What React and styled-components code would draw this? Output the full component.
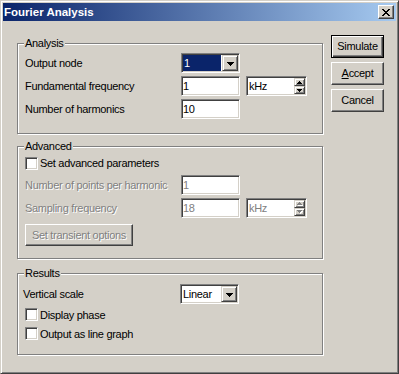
import React from 'react';
import styled, { createGlobalStyle, css } from 'styled-components';

const C = {
  face: '#d4d0c8',
  light: '#ffffff',
  shadow: '#808080',
  dark: '#404040',
  select: '#0a246a',
};

const GlobalStyle = createGlobalStyle`
  html, body { margin: 0; padding: 0; background: ${C.face}; }
`;

const sunken = css`
  box-sizing: border-box;
  border: 1px solid;
  border-color: ${C.shadow} ${C.light} ${C.light} ${C.shadow};
  box-shadow: inset 1px 1px ${C.dark}, inset -1px -1px ${C.face};
`;

const raised = css`
  box-sizing: border-box;
  border: 1px solid;
  border-color: ${C.face} ${C.dark} ${C.dark} ${C.face};
  box-shadow: inset 1px 1px ${C.light}, inset -1px -1px ${C.shadow};
  background: ${C.face};
`;

const disabledText = css`
  color: ${C.shadow};
  text-shadow: 1px 1px 0 ${C.light};
`;

const Window = styled.div`
  width: 399px;
  height: 374px;
  box-sizing: border-box;
  background: ${C.face};
  border: 1px solid;
  border-color: ${C.face} ${C.dark} ${C.dark} ${C.face};
  box-shadow: inset 1px 1px ${C.light}, inset -1px -1px ${C.shadow};
  padding: 2px;
  display: flex;
  flex-direction: column;
  font-family: "Liberation Sans", Arial, sans-serif;
  font-size: 11px;
  letter-spacing: -0.3px;
  color: #000;
`;

const TitleBar = styled.div`
  flex: none;
  height: 18px;
  display: flex;
  align-items: center;
  justify-content: space-between;
  padding: 0 2px 0 1px;
  background: linear-gradient(to right, #0a246a, #a6caf0);
`;

const Title = styled.span`
  color: #fff;
  font-weight: bold;
  font-size: 11.5px;
  letter-spacing: 0;
  line-height: 18px;
  white-space: nowrap;
`;

const CloseButton = styled.div`
  box-sizing: border-box;
  width: 16px;
  height: 14px;
  border: 1px solid;
  border-color: ${C.light} ${C.dark} ${C.dark} ${C.light};
  box-shadow: inset -1px -1px ${C.shadow};
  background: ${C.face};
  display: flex;
  align-items: center;
  justify-content: center;
  padding: 1px 0 0 0;
`;

const Body = styled.div`
  flex: 1;
  display: flex;
  align-items: flex-start;
  padding: 14px 0 0 14px;
`;

const Groups = styled.div`
  width: 306px;
  margin-top: 2px;
  display: flex;
  flex-direction: column;
`;

const Group = styled.fieldset`
  box-sizing: border-box;
  width: 306px;
  min-width: 0;
  margin: ${p => p.$mt || 0}px 0 0 0;
  padding: ${p => p.$pt}px 7px ${p => p.$pb}px 7px;
  border: 1px solid ${C.shadow};
  box-shadow: inset 1px 1px ${C.light}, 1px 1px ${C.light};
`;

const Legend = styled.legend`
  padding: 0 1px;
  margin-left: -1px;
  line-height: 12px;
  background: ${C.face};
`;

const Row = styled.div`
  display: flex;
  align-items: center;
  height: ${p => p.$h || 20}px;
  margin-top: ${p => p.$mt || 0}px;
`;

const Label = styled.span`
  flex: none;
  width: ${p => p.$w || 156}px;
  margin-left: ${p => p.$ml || 0}px;
  white-space: nowrap;
  ${p => p.$disabled && disabledText}
`;

const Field = styled.div`
  ${sunken}
  width: ${p => p.$w || 59}px;
  height: 20px;
  background: #fff;
  display: flex;
  align-items: center;
  padding: 0 1px 1px 1px;
  color: ${p => (p.$disabled ? C.shadow : '#000')};
`;

const Combo = styled.div`
  ${sunken}
  width: ${p => p.$w || 59}px;
  height: 20px;
  background: #fff;
  display: flex;
  padding: 1px;
  margin-left: ${p => p.$ml || 0}px;
`;

const ComboText = styled.div`
  flex: 1;
  display: flex;
  align-items: center;
  padding: 0 0 1px 1px;
  margin-right: 1px;
  ${p =>
    p.$selected &&
    css`
      background: ${C.select};
      color: #fff;
    `}
`;

const ComboButton = styled.div`
  ${raised}
  flex: none;
  width: 16px;
  display: flex;
  align-items: center;
  justify-content: center;
  padding-top: 1px;
`;

const Spin = styled.div`
  ${sunken}
  width: 61px;
  height: 20px;
  margin-left: 6px;
  background: #fff;
  display: flex;
  padding: 1px;
  color: ${p => (p.$disabled ? C.shadow : '#000')};
`;

const SpinText = styled.div`
  flex: 1;
  display: flex;
  align-items: center;
  padding: 0 0 1px 1px;
`;

const SpinButtons = styled.div`
  flex: none;
  width: 11px;
  display: flex;
  flex-direction: column;
`;

const SpinButton = styled.div`
  ${raised}
  flex: 1;
  display: flex;
  align-items: center;
  justify-content: center;
`;

const Check = styled.span`
  ${sunken}
  flex: none;
  width: 13px;
  height: 13px;
  background: #fff;
  margin-right: 2px;
`;

const CheckRow = styled.label`
  display: flex;
  align-items: center;
  height: ${p => p.$h || 16}px;
  margin-top: ${p => p.$mt || 0}px;
  white-space: nowrap;
`;

const pushBevel = css`
  box-sizing: border-box;
  background: ${C.face};
  border: 1px solid;
  border-color: ${C.light} ${C.dark} ${C.dark} ${C.light};
  box-shadow: inset -1px -1px ${C.shadow}, inset 1px 1px ${C.face};
`;

const PushButton = styled.div`
  ${pushBevel}
  display: flex;
  align-items: center;
  justify-content: center;
  width: ${p => p.$w || 53}px;
  height: ${p => p.$h || 23}px;
  margin-top: ${p => p.$mt || 0}px;
  padding-bottom: 1px;
  white-space: nowrap;
  ${p =>
    p.$default &&
    css`
      border: 1px solid #000;
      box-shadow: inset 1px 1px ${C.light}, inset -1px -1px ${C.dark}, inset -2px -2px ${C.shadow};
    `}
  ${p => p.$disabled && disabledText}
`;

const Buttons = styled.div`
  display: flex;
  flex-direction: column;
  gap: 4px;
  margin-left: 8px;
`;

const Svg = styled.svg`
  display: block;
`;

const Arrow = ({ dir = 'down', small = false, disabled = false }) => {
  const rows = small ? [5, 3, 1] : [7, 5, 3, 1];
  const w = rows[0];
  const h = rows.length;
  const rects = rows.map((len, i) => ({
    x: (w - len) / 2,
    y: dir === 'down' ? i : h - 1 - i,
    len,
  }));
  const extra = disabled ? 1 : 0;
  return (
    <Svg width={w + extra} height={h + extra} shapeRendering="crispEdges">
      {disabled &&
        rects.map(r => (
          <rect key={'e' + r.y} x={r.x + 1} y={r.y + 1} width={r.len} height={1} fill={C.light} />
        ))}
      {rects.map(r => (
        <rect key={r.y} x={r.x} y={r.y} width={r.len} height={1} fill={disabled ? C.shadow : '#000'} />
      ))}
    </Svg>
  );
};

const CloseGlyph = () => {
  const cells = [
    [0, [[0, 2], [6, 2]]],
    [1, [[1, 2], [5, 2]]],
    [2, [[2, 4]]],
    [3, [[3, 2]]],
    [4, [[2, 4]]],
    [5, [[1, 2], [5, 2]]],
    [6, [[0, 2], [6, 2]]],
  ];
  return (
    <Svg width="8" height="7" shapeRendering="crispEdges">
      {cells.flatMap(([y, segs]) =>
        segs.map(([x, w]) => <rect key={`${y}-${x}`} x={x} y={y} width={w} height={1} fill="#000" />)
      )}
    </Svg>
  );
};

const Dropdown = ({ value, selected, ml }) => (
  <Combo $ml={ml}>
    <ComboText $selected={selected}>{value}</ComboText>
    <ComboButton>
      <Arrow />
    </ComboButton>
  </Combo>
);

const UnitSpin = ({ unit, disabled }) => (
  <Spin $disabled={disabled}>
    <SpinText>{unit}</SpinText>
    <SpinButtons>
      <SpinButton>
        <Arrow dir="up" small disabled={disabled} />
      </SpinButton>
      <SpinButton>
        <Arrow dir="down" small disabled={disabled} />
      </SpinButton>
    </SpinButtons>
  </Spin>
);

export default function App() {
  return (
    <>
      <GlobalStyle />
      <Window>
        <TitleBar>
          <Title>Fourier Analysis</Title>
          <CloseButton>
            <CloseGlyph />
          </CloseButton>
        </TitleBar>
        <Body>
          <Groups>
            <Group $pt={4} $pb={14}>
              <Legend>Analysis</Legend>
              <Row>
                <Label>Output node</Label>
                <Dropdown value="1" selected />
              </Row>
              <Row $mt={3}>
                <Label>Fundamental frequency</Label>
                <Field>1</Field>
                <UnitSpin unit="kHz" />
              </Row>
              <Row $mt={3}>
                <Label>Number of harmonics</Label>
                <Field>10</Field>
              </Row>
            </Group>

            <Group $mt={6} $pt={3} $pb={12}>
              <Legend>Advanced</Legend>
              <CheckRow>
                <Check />
                Set advanced parameters
              </CheckRow>
              <Row $mt={4}>
                <Label $disabled>Number of points per harmonic</Label>
                <Field $disabled>1</Field>
              </Row>
              <Row $mt={3}>
                <Label $disabled>Sampling frequency</Label>
                <Field $disabled>18</Field>
                <UnitSpin unit="kHz" disabled />
              </Row>
              <PushButton $w={108} $h={22} $mt={6} $disabled>
                Set transient options
              </PushButton>
            </Group>

            <Group $mt={8} $pt={5} $pb={11}>
              <Legend>Results</Legend>
              <Row>
                <Label $ml={-2} $w={157}>Vertical scale</Label>
                <Dropdown value="Linear" />
              </Row>
              <CheckRow $h={19} $mt={1}>
                <Check />
                Display phase
              </CheckRow>
              <CheckRow $h={19}>
                <Check />
                Output as line graph
              </CheckRow>
            </Group>
          </Groups>

          <Buttons>
            <PushButton $default>Simulate</PushButton>
            <PushButton>
              <span>
                <u>A</u>ccept
              </span>
            </PushButton>
            <PushButton>Cancel</PushButton>
          </Buttons>
        </Body>
      </Window>
    </>
  );
}
